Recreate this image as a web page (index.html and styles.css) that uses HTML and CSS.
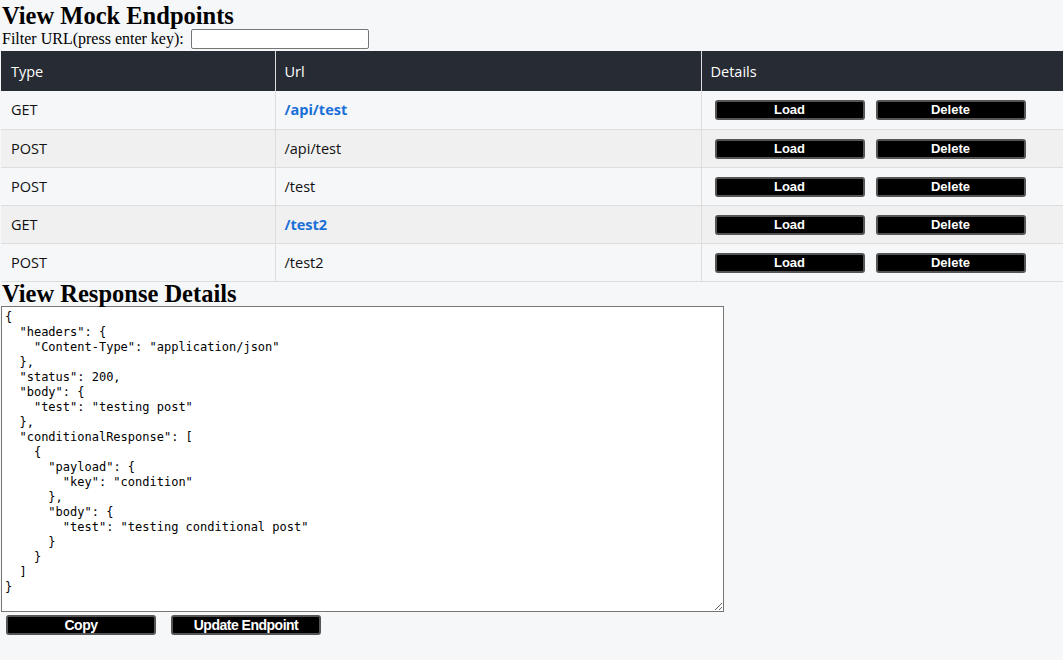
FILE: index.html
```html
<!DOCTYPE html>
<html>
<head>
<meta charset="utf-8">
<link rel="stylesheet" href="styles.css">
</head>
<body>
<h1 class="title first">View Mock Endpoints</h1>
<div class="filter">Filter URL(press enter key): <input class="filter-input" type="text"></div>
<table class="endpoints">
  <thead>
    <tr><th class="c-type">Type</th><th class="c-url">Url</th><th class="c-det">Details</th></tr>
  </thead>
  <tbody>
    <tr><td>GET</td><td class="url get">/api/test</td><td class="det"><button class="btn">Load</button><button class="btn">Delete</button></td></tr>
    <tr><td>POST</td><td class="url">/api/test</td><td class="det"><button class="btn">Load</button><button class="btn">Delete</button></td></tr>
    <tr><td>POST</td><td class="url">/test</td><td class="det"><button class="btn">Load</button><button class="btn">Delete</button></td></tr>
    <tr><td>GET</td><td class="url get">/test2</td><td class="det"><button class="btn">Load</button><button class="btn">Delete</button></td></tr>
    <tr><td>POST</td><td class="url">/test2</td><td class="det"><button class="btn">Load</button><button class="btn">Delete</button></td></tr>
  </tbody>
</table>
<h1 class="title">View Response Details</h1>
<textarea class="response">{
  "headers": {
    "Content-Type": "application/json"
  },
  "status": 200,
  "body": {
    "test": "testing post"
  },
  "conditionalResponse": [
    {
      "payload": {
        "key": "condition"
      },
      "body": {
        "test": "testing conditional post"
      }
    }
  ]
}</textarea>
<div class="actions"><button class="btn narrow">Copy</button><button class="btn narrow">Update Endpoint</button></div>
</body>
</html>
```
FILE: styles.css
```css
html, body {
  margin: 0;
  padding: 0;
  background: #f6f7f9;
}
body {
  padding: 0 0 0 1px;
  font-family: "Liberation Serif", serif;
  color: #000;
}
.title {
  margin: 0;
  padding-left: 1px;
  font-family: "Liberation Serif", serif;
  font-weight: bold;
  font-size: 24.5px;
  line-height: 24px;
  height: 24px;
}
.title.first {
  padding-top: 4px;
}
.filter {
  font-size: 16px;
  line-height: 22px;
  height: 23px;
  padding-left: 1px;
}
.filter-input {
  width: 172px;
  height: 16px;
  padding: 1px 2px;
  border: 1px solid #767676;
  border-radius: 2px;
  background: #fff;
  vertical-align: top;
  margin: 1px 0 0 3px;
  font-size: 13px;
}
.endpoints {
  width: 1062px;
  border-collapse: collapse;
  font-family: "Open Sans", "DejaVu Sans", sans-serif;
  font-size: 14.5px;
}
.endpoints th {
  background: #272b33;
  color: #fff;
  font-weight: normal;
  text-align: left;
  height: 40px;
  padding: 0 9px;
  border-right: 1px solid #ddd;
  box-sizing: border-box;
}
.endpoints th:first-child,
.endpoints td:first-child { padding-left: 10px; }
.endpoints th:last-child { border-right: none; }
.c-type { width: 274px; }
.c-url { width: 426px; }
.endpoints td {
  height: 38px;
  padding: 0 9px;
  border-right: 1px solid #ddd;
  border-bottom: 1px solid #ddd;
  box-sizing: border-box;
  color: #111;
}
.endpoints td:last-child { border-right: none; }
.endpoints tbody tr:nth-child(odd) { background: #f6f7f9; }
.endpoints tbody tr:nth-child(even) { background: #f0f0f0; }
.url.get {
  color: #1a6fd8;
  font-weight: bold;
}
.det {
  padding-left: 13px !important;
}
.btn {
  width: 150px;
  height: 20px;
  background: #000;
  color: #fff;
  border: 2px solid #555;
  border-radius: 3px;
  font-family: "Liberation Sans", Arial, sans-serif;
  font-weight: bold;
  font-size: 13px;
  line-height: 14px;
  padding: 0;
  vertical-align: middle;
}
.det .btn + .btn { margin-left: 11px; }
.btn.narrow {
  font-size: 14px;
  letter-spacing: -0.5px;
}
.response {
  display: block;
  box-sizing: border-box;
  width: 723px;
  height: 306px;
  margin: 0;
  padding: 3px 3px;
  border: 1px solid #767676;
  background: #fff;
  font-family: "DejaVu Sans Mono", monospace;
  font-size: 12px;
  line-height: 15px;
  color: #000;
  resize: both;
}
.actions {
  padding: 3px 0 0 5px;
  display: flex;
  gap: 15px;
}
.actions .btn { width: 150px; }
```
